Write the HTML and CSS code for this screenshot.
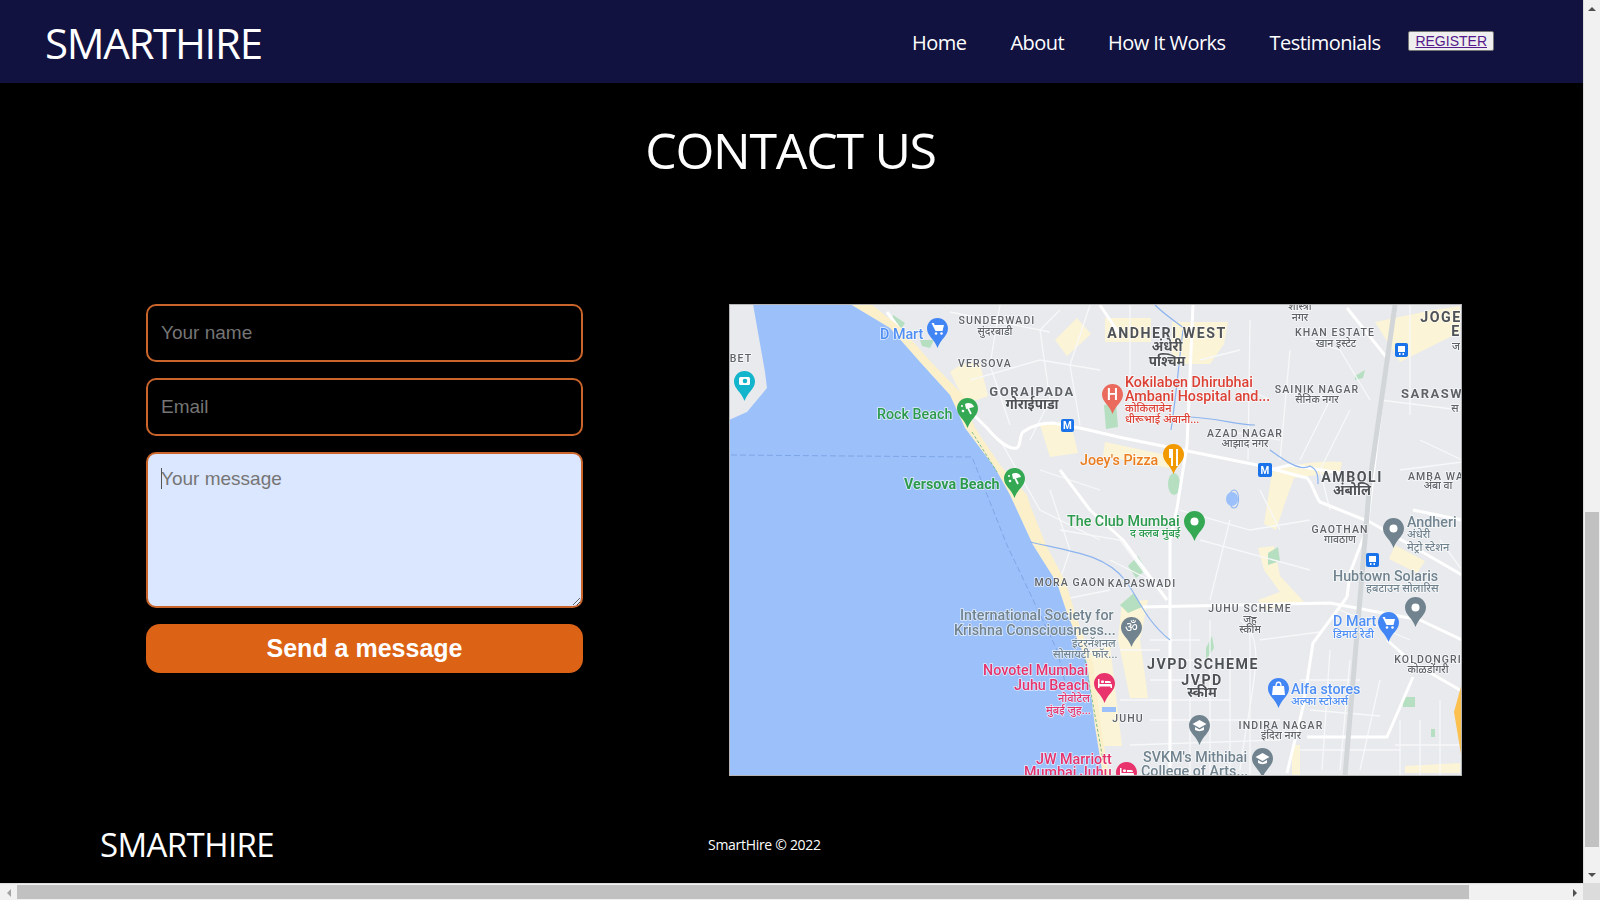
FILE: index.html
```html
<!DOCTYPE html>
<html>
	<head>
		<meta charset="utf-8">
		<title>SmartHire</title>
		<link rel="stylesheet" href="styles.css">
	</head>
	<body>
		<div class="window">
			<div class="page">
				<header class="nav">
					<a href="#" class="logo">SMARTHIRE</a>
					<ul class="links">
						<li><a href="#">Home</a></li>
						<li><a href="#">About</a></li>
						<li><a href="#">How It Works</a></li>
						<li><a href="#">Testimonials</a></li>
					</ul>
					<button class="register"><a href="#">REGISTER</a></button>
				</header>

				<h1 class="title">CONTACT US</h1>

				<section class="contact">
					<form class="form">
						<input type="text" placeholder="Your name">
						<input type="email" placeholder="Email">
						<div class="msg">
							<textarea placeholder="Your message"></textarea>
							<span class="caret"></span>
						</div>
						<button type="button" class="send">Send a message</button>
					</form>

					<svg class="map" viewBox="729 304 733 472" width="733" height="472">
						<defs>
							<path id="pin" d="M10.5 0C4.7 0 0 4.7 0 10.5c0 7.5 7.5 10.5 10.5 19.5C13.5 21 21 18 21 10.5 21 4.7 16.3 0 10.5 0z"/>
							<g id="ic-dot"><circle cx="10.5" cy="10.5" r="4" fill="#fff"/></g>
							<g id="ic-umb" fill="none" stroke="#fff" stroke-width="1.7">
								<path d="M8 6c3-2 8-1 9 3l-8 2z" fill="#fff" stroke="none"/>
								<path d="M11 10l3 6"/><circle cx="6" cy="13" r="1.3" fill="#fff" stroke="none"/><circle cx="5" cy="8" r="1" fill="#fff" stroke="none"/>
							</g>
							<g id="ic-cart" fill="#fff">
								<path d="M4.5 5H7l.6 2H17l-1.5 6H8.5z"/><circle cx="9" cy="15.5" r="1.3"/><circle cx="14.5" cy="15.5" r="1.3"/>
							</g>
							<g id="ic-cap" fill="#fff">
								<path d="M10.5 5L3.5 9l7 4 7-4z"/><path d="M6 12v3c2.500 1.500 6.500 1.500 9 0v-3l-4.500 2.500z"/>
							</g>
							<g id="ic-bed" fill="#fff">
								<path d="M4 6h1.5v5H17a1 1 0 0 1 1 1v3h-1.500v-1.500h-11V15H4z"/><rect x="7" y="7.5" width="3" height="2.5" rx="1"/><path d="M11 8h4a2 2 0 0 1 2 2H11z"/>
							</g>
						</defs>

						<rect class="land" x="729" y="304" width="733" height="472"/>

						<!-- built up patches -->
						<g class="patch">
							<path d="M950 372c10-8 22-12 30-8l8 32-22 8z"/>
							<path d="M1055 340l22-22 14 16-24 22z"/>
							<path d="M1105 318h46v24h-46z"/>
							<path d="M1172 322h56l-4 22-14 20h-38z"/>
							<path d="M1040 425l30-4 8 32-28 4z"/>
							<path d="M1105 442l66 14-2 12-66-12z"/>
							<path d="M1272 472c20-8 50-12 70-10l-2 10-46 6-8 22-10 30-12-6z"/>
							<path d="M1375 322l58-12 27-4v26l-60 30z"/>
							<path d="M1395 545l30 16-8 12-28-14z"/>
							<path d="M1258 548l16-2 6 30 24 26-40 8-6-10 22-8-16-22z"/>
							<path d="M1122 602l26-2-8 40 8 58-18 0-12-58z"/>
							<path d="M1090 650l20-4 12 100-22 0z"/>
							<path d="M1405 766l55-3v10h-55z"/>
							<path d="M1292 745h8v30h-8z"/>
						</g>
						<g class="park">
							<path d="M1104 405l12-2 2 24-12 2z"/>
							<ellipse cx="1174" cy="484" rx="6" ry="11"/>
							<path d="M1128 566l10-10 8 14-10 8z"/>
							<path d="M1120 605l14-12 8 14-14 6z"/>
							<path d="M1268 553l10-6 2 14-12 4z"/>
							<path d="M1206 648l6-12 2 12-8 12z"/>
							<path d="M1403 697h12v10h-12z"/>
							<path d="M1431 729h4v8h-4z"/>
							<path d="M893 315l12 8-4 6-10-6z"/>
							<path d="M920 340l14 0-4 8-8-2z"/>
							<path d="M1355 376l10-6-2 8-8 2z"/>
						</g>

						<g class="minor">
							<path d="M1000 305l-10 60 20 60M1040 330l10 70-20 40M1090 305l-20 60 10 60M1130 305v120M1060 310l-20 20"/>
							<path d="M950 312l100 20M970 380l70-20 60 10M1000 440l40 70 60 30M1040 470l60 20M1050 490l20 60-10 30"/>
							<path d="M1250 320l-2 140M1290 350l-10 110M1330 400l-30 60M1310 340l30 10 30 50M1200 360l40-10M1230 380l40 20"/>
							<path d="M1220 430l60 10M1350 410l-30 60 10 40M1410 305v110M1420 440l42 20M1400 470l62-8M1380 400l80 10"/>
							<path d="M1060 530l60 10 30 40M1180 510l70 20 60-10M1200 540l110 30M1230 520l-20 80M1260 490l20 40"/>
							<path d="M1190 620v156M1210 620v156M1230 650v126M1250 620v156M1150 640h50M1150 680h60M1150 720h130M1150 700h80M1150 660h80"/>
							<path d="M1260 640l60-8M1240 620c30 20 10 70 0 150M1330 650l-8 120M1350 660l-10 110M1380 680l-20 90M1300 680h60M1310 710l70 6"/>
							<path d="M1400 720v55M1420 720v55M1440 700v75M1395 745h67M1300 750h100M1340 610l70 30M1440 540l22 30"/>
							<path d="M1120 650h40M1120 700h40M1130 745l150-5M1110 560l60 30M1060 600l50-10"/>
						</g>
						<g class="road">
							<path d="M887 312l46 63 54 53c10 12 22 22 30 20 4-2 2-12 6-16 8-6 20-9 30-9l27 5 43 10 134 27 50 13c6 6 8 18 13 24l50 20 23 13 69 40"/>
							<path d="M1193 305l-6 140-10 63-7 32v236"/>
							<path d="M1060 470l30 40 33 30 44 60"/>
							<path d="M1143 607l187-4 90 17 42 20"/>
							<path d="M1347 597l-34 46-10 64-16 66"/>
							<path d="M1347 308l40 50-20 170-17 45-3 24"/>
							<path d="M1413 677l-26 60h-80"/>
							<path d="M1387 640l26 23 47 27"/>
							<path d="M1270 470l20-5 50 8"/>
							<path d="M1413 510l49 10M1100 305l20 30"/>
						</g>
						<path class="rail" d="M1395 305l-25 175-25 296"/>

						<path class="sand" d="M850 304l40 24 30 34 30 33 15 33 30 40 15 27 23 50 24 38 10 30 20 50 8 64 8 49h6l-8-49-8-64-18-50-9-30-20-38-16-40-3-10-27-30-25-37-12-33-32-33-30-34-30-24z"/>
						<path class="sea" d="M753 304h97l40 24 30 34 30 33 15 33 30 40 15 27 23 50 24 38 10 30 20 50 8 64 8 49H729V420l18-8 20-24-2-16z"/>
						<path class="edge" d="M1462 683l-8 29 8 48z"/>
						<path class="water" d="M1125 580c-20-25-50-28-95-38M1234 490c-6 0-6 18 0 18 6 0 6-18 0-18zM1155 305c10 10 20 16 30 24M1183 330c-4 30-6 60-12 100M1185 417c30 0 50 8 70 8M1270 450c14 10 30 22 40 16 8 4 8 10 8 18M1125 580c15 20 20 40 45 60"/>
						<ellipse class="lake" cx="1232" cy="499" rx="6" ry="7"/>
						<path class="lake" d="M1102 707h14v5h-14z"/>
						<path class="border" d="M731 455l241 2 35 88 50 105 10 40"/>
						<path class="trail" d="M972 432l25 40M1085 660l18 100"/>

						<!-- transit -->
						<g class="stop">
							<rect x="1061" y="419" width="13" height="13" rx="2"/><text x="1067.5" y="429">M</text>
							<rect x="1258" y="463" width="14" height="14" rx="2"/><text x="1265" y="474">M</text>
							<rect x="1395" y="343" width="13" height="14" rx="2"/><path d="M1398 346h7v6h-7zM1399 353h1.5v2h-1.500zM1402.500 353h1.500v2h-1.500z" fill="#fff"/>
							<rect x="1366" y="553" width="13" height="14" rx="2"/><path d="M1369 556h7v6h-7zM1370 563h1.5v2h-1.500zM1373.500 563h1.500v2h-1.500z" fill="#fff"/>
						</g>

						<!-- pins -->
						<use href="#pin" x="927" y="318" fill="#4285f4"/><use href="#ic-cart" x="927" y="318"/>
						<use href="#pin" x="734" y="371" fill="#12b5cb"/><rect x="739" y="377" width="11" height="8" rx="1.5" fill="#fff"/><circle cx="745" cy="381" r="2.3" fill="#12b5cb"/>
						<use href="#pin" x="957" y="398" fill="#34a853"/><use href="#ic-umb" x="957" y="398"/>
						<use href="#pin" x="1004" y="468" fill="#34a853"/><use href="#ic-umb" x="1004" y="468"/>
						<use href="#pin" x="1102" y="384" fill="#ea6a5e"/><text x="1112.5" y="400" class="pin-h">H</text>
						<use href="#pin" x="1163" y="444" fill="#f29900"/><path d="M1169 449v9h2v8h2v-17zM1176 449v17h2v-17z" fill="#fff"/>
						<use href="#pin" x="1184" y="511" fill="#34a853"/><use href="#ic-dot" x="1184" y="511"/>
						<use href="#pin" x="1383" y="518" fill="#70838f"/><use href="#ic-dot" x="1383" y="518"/>
						<use href="#pin" x="1405" y="597" fill="#70838f"/><use href="#ic-dot" x="1405" y="597"/>
						<use href="#pin" x="1378" y="612" fill="#4285f4"/><use href="#ic-cart" x="1378" y="612"/>
						<use href="#pin" x="1121" y="617" fill="#70838f"/><text x="1131.5" y="632" class="pin-om">ॐ</text>
						<use href="#pin" x="1094" y="673" fill="#e8336d"/><use href="#ic-bed" x="1094" y="673"/>
						<use href="#pin" x="1268" y="678" fill="#4285f4"/><path d="M1273 686h11l1 9h-13z" fill="#fff"/><path d="M1276 686c0-5 5-5 5 0" fill="none" stroke="#fff" stroke-width="1.3"/>
						<use href="#pin" x="1189" y="715" fill="#70838f"/><use href="#ic-cap" x="1189" y="715"/>
						<use href="#pin" x="1252" y="748" fill="#70838f"/><use href="#ic-cap" x="1252" y="748"/>
						<use href="#pin" x="1116" y="762" fill="#e8336d"/><use href="#ic-bed" x="1116" y="762"/>

						<!-- area names -->
						<g class="area">
							<text x="997" y="324">SUNDERWADI</text>
							<text x="985" y="367">VERSOVA</text>
							<text x="741" y="362">BET</text>
							<text x="1335" y="336">KHAN ESTATE</text>
							<text x="1317" y="393">SAINIK NAGAR</text>
							<text x="1245" y="437">AZAD NAGAR</text>
							<text x="1340" y="533">GAOTHAN</text>
							<text x="1070" y="586">MORA GAON</text>
							<text x="1142" y="587">KAPASWADI</text>
							<text x="1128" y="722">JUHU</text>
							<text x="1250" y="612">JUHU SCHEME</text>
							<text x="1428" y="663">KOLDONGRI</text>
							<text x="1281" y="729">INDIRA NAGAR</text>
							<text x="1436" y="480">AMBA WA</text>
						</g>
						<g class="area big">
							<text x="1167" y="338">ANDHERI WEST</text>
							<text x="1352" y="482">AMBOLI</text>
							<text x="1203" y="669">JVPD SCHEME</text>
							<text x="1202" y="685">JVPD</text>
							<text x="1441" y="322">JOGE</text>
							<text x="1456" y="336">E</text>
						</g>
						<g class="area mid">
							<text x="1032" y="396">GORAIPADA</text>
							<text x="1432" y="398">SARASW</text>
						</g>
						<g class="hi">
							<text x="995" y="335">सुंदरबाडी</text>
							<text x="1300" y="310">शास्त्री</text>
							<text x="1300" y="321">नगर</text>
							<text x="1336" y="347">खान इस्टेट</text>
							<text x="1317" y="403">सैनिक नगर</text>
							<text x="1245" y="447">आझाद नगर</text>
							<text x="1340" y="543">गावठाण</text>
							<text x="1250" y="623">जुहु</text>
							<text x="1250" y="633">स्कीम</text>
							<text x="1428" y="673">कोळडोंगरी</text>
							<text x="1281" y="739">इंदिरा नगर</text>
							<text x="1438" y="489">अंबा वा</text>
							<text x="1456" y="350">ज</text>
							<text x="1455" y="412">स</text>
						</g>
						<g class="hi big">
							<text x="1032" y="409">गोराईपाडा</text>
							<text x="1167" y="351">अंधेरी</text>
							<text x="1167" y="366">पश्चिम</text>
							<text x="1352" y="495">अंबोलि</text>
							<text x="1202" y="697">स्कीम</text>
						</g>

						<!-- places -->
						<g class="place blue">
							<text x="880" y="339">D Mart</text>
							<text x="1333" y="626">D Mart</text>
							<text x="1291" y="694">Alfa stores</text>
							<text x="1333" y="638" class="small">डिमार्ट रेढी</text>
							<text x="1291" y="705" class="small">अल्फा स्टोअर्स</text>
						</g>
						<g class="place green">
							<text x="877" y="419">Rock Beach</text>
							<text x="904" y="489" class="bold">Versova Beach</text>
							<text x="1067" y="526">The Club Mumbai</text>
							<text x="1130" y="537" class="small">द क्लब मुंबई</text>
						</g>
						<g class="place red">
							<text x="1125" y="387">Kokilaben Dhirubhai</text>
							<text x="1125" y="401">Ambani Hospital and...</text>
							<text x="1125" y="412" class="small">कोकिलाबेन</text>
							<text x="1125" y="423" class="small">धीरूभाई अंबानी...</text>
						</g>
						<g class="place orange">
							<text x="1080" y="465">Joey's Pizza</text>
						</g>
						<g class="place grey">
							<text x="1407" y="527">Andheri</text>
							<text x="1407" y="538" class="small">अंधेरी</text>
							<text x="1407" y="551" class="small">मेट्रो स्टेशन</text>
							<text x="1333" y="581">Hubtown Solaris</text>
							<text x="1366" y="592" class="small">हबटाउन सोलारिस</text>
							<text x="960" y="620">International Society for</text>
							<text x="954" y="635">Krishna Consciousness...</text>
							<text x="1072" y="647" class="small">इंटरनॅशनल</text>
							<text x="1053" y="658" class="small">सोसायटी फॉर...</text>
							<text x="1143" y="762">SVKM's Mithibai</text>
							<text x="1141" y="776">College of Arts...</text>
						</g>
						<g class="place pink">
							<text x="983" y="675">Novotel Mumbai</text>
							<text x="1014" y="690">Juhu Beach</text>
							<text x="1058" y="702" class="small">नोवोटेल</text>
							<text x="1046" y="714" class="small">मुंबई जुह...</text>
							<text x="1036" y="764">JW Marriott</text>
							<text x="1024" y="777">Mumbai Juhu</text>
						</g>
					</svg>
				</section>

				<footer class="foot">
					<span class="foot-logo">SMARTHIRE</span>
					<span class="copy">SmartHire © 2022</span>
				</footer>
			</div>

			<div class="vbar">
				<span class="arr up"></span>
				<div class="vtrack"><div class="vthumb"></div></div>
				<span class="arr down"></span>
			</div>
			<div class="hbar">
				<span class="arr left"></span>
				<div class="htrack"><div class="hthumb"></div></div>
				<span class="arr right"></span>
			</div>
			<div class="corner"></div>
		</div>
	</body>
</html>
```

FILE: styles.css
```css
*{margin: 0; padding: 0; box-sizing: border-box;}
html,body{height: 100%; overflow: hidden;}
li{list-style: none;}

.window{display: grid; grid-template-columns: 1583px 17px; grid-template-rows: 883px 17px; height: 900px;}
.page{background: #000; color: #fff; overflow: hidden; font-family: "Open Sans", sans-serif;}

/* top bar */
.nav{height: 83px; background: #111240; display: flex; align-items: center; padding-left: 45px;}
.logo{color: #fff; text-decoration: none; font-size: 42px; letter-spacing: -1.3px; margin-right: auto; margin-top: 1px;}
.links{display: flex; gap: 44px; margin-top: 2px;}
.links a{color: #fff; text-decoration: none; font-size: 20px; letter-spacing: -.55px;}
.register{margin: -2px 89px 0 28px; background: #efefef; border: 1px solid #767676; border-radius: 2px; padding: 1px 6px; font-family: "Liberation Sans", sans-serif; font-size: 14px;}
.register a{color: #551a8b;}

.title{font-size: 50px; font-weight: 400; letter-spacing: -1.25px; text-align: center; line-height: 68px; margin-top: 33px; padding-right: 2px;}

/* form + map */
.contact{display: flex; align-items: flex-start; margin-top: 120px; padding-left: 146px;}
.form{width: 437px; display: flex; flex-direction: column; gap: 16px; margin-right: 146px;}
.form input,.form textarea{display: block; width: 100%; background: #000; border: 2px solid #c9642a; border-radius: 10px; padding: 0 13px; font-family: "Liberation Sans", sans-serif; font-size: 19px; color: #fff; outline: none;}
.form input{height: 58px;}
.msg{position: relative;}
.form textarea{height: 156px; padding-top: 14px; background: #dbe7fe;}
.caret{position: absolute; left: 15px; top: 16px; width: 1px; height: 21px; background: #555;}
.send{height: 49px; background: #dc6316; border: 0; border-radius: 14px; color: #fff; font-family: "Liberation Sans", sans-serif; font-weight: 700; font-size: 25px;}

.foot{display: flex; align-items: center; margin-top: 46px; padding-left: 100px;}
.foot-logo{font-size: 33px; letter-spacing: -.6px; width: 608px;}
.copy{font-size: 14px; letter-spacing: -.3px; margin-top: -1px;}

/* map drawing */
.map{display: block; outline: 1px solid #b5b5b5; outline-offset: -1px; filter: blur(.5px); font-family: Roboto, "Noto Sans", sans-serif;}
.land{fill: #e8eaed;}
.sea{fill: #9cc0f9;}
.sand{fill: #fbf0c9;}
.edge{fill: #fbc04e;}
.patch path{fill: #fcf4d6;}
.park path,.park ellipse{fill: #b5dfc0;}
.minor{fill: none; stroke: #f7f8f9; stroke-width: 1.3;}
.road{fill: none; stroke: #fff; stroke-width: 3; stroke-linejoin: round;}
.rail{fill: none; stroke: #d3d6d9; stroke-width: 5;}
.water{fill: none; stroke: #8db4f0; stroke-width: 1.2;}
.lake{fill: #9cc0f9;}
.border{fill: none; stroke: #7ea6e6; stroke-width: 1; stroke-dasharray: 6 3;}
.trail{fill: none; stroke: #7fbf8c; stroke-width: 1; stroke-dasharray: 3 2;}
.stop rect{fill: #1a73e8;}
.stop text{fill: #fff; font-size: 10px; font-weight: 700; text-anchor: middle;}
.pin-h{fill: #fff; font-size: 16px; font-weight: 500; text-anchor: middle;}
.pin-om{fill: #fff; font-size: 14px; text-anchor: middle;}

.area text,.hi text{text-anchor: middle; paint-order: stroke; stroke: rgba(255,255,255,.7); stroke-width: 1.5px; font-weight: 500;}
.area text{fill: #5f6368; font-size: 10.5px; letter-spacing: 1.1px;}
.area.big text{fill: #4e5256; font-size: 14.2px; letter-spacing: 1.5px; font-weight: 700;}
.area.mid text{fill: #5f6368; font-size: 13px; letter-spacing: 1.5px; font-weight: 700;}
.hi text{fill: #5f6368; font-size: 10.5px;}
.hi.big text{fill: #4e5256; font-size: 13.5px; font-weight: 700;}
.place text{font-size: 14.3px; font-weight: 500; paint-order: stroke; stroke: rgba(255,255,255,.7); stroke-width: 1.5px;}
.place text.small{font-size: 11px;}
.place text.bold{font-weight: 700;}
.blue text{fill: #4f8ff5;}
.green text{fill: #2c9a4d;}
.red text{fill: #dc4136;}
.orange text{fill: #ea7d1f;}
.grey text{fill: #70838f;}
.pink text{fill: #e6336d;}

/* scrollbars */
.vbar,.hbar{background: #f1f1f1; display: flex;}
.vbar{flex-direction: column; border-left: 1px solid #ddd;}
.hbar{border-top: 1px solid #ddd;}
.vtrack,.htrack{flex: 1;}
.vtrack{padding-top: 495px;}
.vthumb{height: 335px; margin: 0 1px; background: #c1c1c1;}
.htrack{padding-top: 1px;}
.hthumb{width: 1452px; height: 14px; background: #c1c1c1;}
.arr{flex: none; width: 17px; height: 17px; display: flex; align-items: center; justify-content: center;}
.vbar .arr{width: 16px;}
.arr::before{content: ""; border: 4px solid transparent;}
.arr.up::before{border-bottom-color: #505050; border-top-width: 0;}
.arr.down::before{border-top-color: #505050; border-bottom-width: 0;}
.arr.left::before{border-right-color: #a3a3a3; border-left-width: 0;}
.arr.right::before{border-left-color: #505050; border-right-width: 0;}
.corner{background: #dcdcdc;}
```
